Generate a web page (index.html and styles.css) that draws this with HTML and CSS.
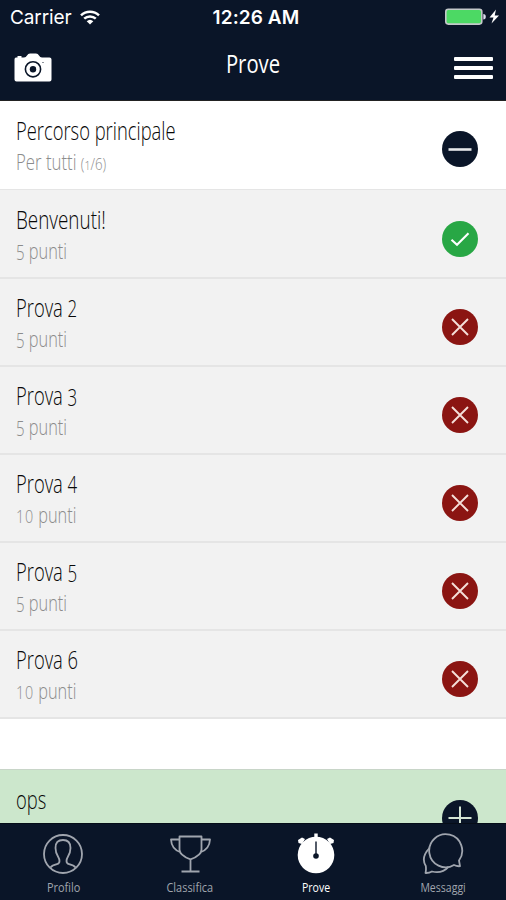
FILE: index.html
```html
<!DOCTYPE html>
<html lang="it">
<head>
<meta charset="utf-8">
<title>Prove</title>
<link rel="stylesheet" href="styles.css">
</head>
<body>
<svg class="defs" width="0" height="0">
  <symbol id="check" viewBox="0 0 36 36"><circle cx="18" cy="18" r="18" fill="#28a745"/><path d="M9.500 18.700l5.500 5L26.500 12.200" fill="none" stroke="#fff" stroke-width="2.100"/></symbol>
  <symbol id="cross" viewBox="0 0 36 36"><circle cx="18" cy="18" r="18" fill="#8b1512"/><path d="M10 10l16 16M26 10L10 26" fill="none" stroke="#f5dfda" stroke-width="1.9"/></symbol>
  <symbol id="minus" viewBox="0 0 36 36"><circle cx="18" cy="18" r="18" fill="#0a1528"/><path d="M6.500 18.500h23" stroke="#e6e8ea" stroke-width="2.600"/></symbol>
  <symbol id="plus" viewBox="0 0 36 36"><circle cx="18" cy="18" r="18" fill="#0a1528"/><path d="M6.500 18h23M18 6.500v23" stroke="#d5e5d5" stroke-width="2"/></symbol>
</svg>
<div class="app">
  <header class="header">
    <div class="status">
      <div class="carrier"><span>Carrier</span>
        <svg width="20" height="15" viewBox="0 0 20 15" fill="none" stroke="#fff" stroke-width="2.5"><path d="M1 5.300a13 13 0 0 1 18 0M4.200 8.700a8.400 8.400 0 0 1 11.600 0"/><path d="M10 14.500L6.700 11.200a4.800 4.800 0 0 1 6.600 0z" fill="#fff" stroke="none"/></svg>
      </div>
      <span class="time">12:26 AM</span>
      <svg class="battery" width="54" height="18" viewBox="0 0 54 18"><rect x=".8" y="1.300" width="36" height="14.800" rx="2.500" fill="#4cd964" stroke="#c3c8c9" stroke-width="1.600"/><path d="M38.300 6q2.500 0 2.500 2.700t-2.500 2.700z" fill="#dde"/><path d="M51 1.500L44.500 9.500h4L46.500 15.500 54 7.500h-4.300z" fill="#fff"/></svg>
    </div>
    <div class="navbar">
      <svg class="camera" width="38" height="29" viewBox="0 0 38 29"><path d="M2 4.500h1.500V3h4v1.500h2.500q2 0 3-2T16 .5h6q2 0 3 2t3 2h7.500q2 0 2 2v20q0 2-2 2h-33q-2 0-2-2v-20q0-2 1.500-2z" fill="#fff"/><circle cx="19" cy="16.300" r="7.600" fill="none" stroke="#0a1528" stroke-width="1.600"/><circle cx="19" cy="16.300" r="3.200" fill="#0a1528"/><circle cx="29" cy="9.500" r=".6" fill="#0a1528"/></svg>
      <h1 class="heading">Prove</h1>
      <div class="burger"><i></i><i></i><i></i></div>
    </div>
  </header>
  <main class="list">
    <section class="row main-row"><div><h2>Percorso principale</h2><p class="group">Per tutti <small>(<span class="one">1</span>/6)</small></p></div><svg class="badge"><use href="#minus"/></svg></section>
    <section class="row first"><div><h2 class="welcome">Benvenuti!</h2><p><span class="low">5</span> punti</p></div><svg class="badge"><use href="#check"/></svg></section>
    <section class="row"><div><h2>Prova <span class="mid">2</span></h2><p><span class="low">5</span> punti</p></div><svg class="badge"><use href="#cross"/></svg></section>
    <section class="row"><div><h2>Prova <span class="low">3</span></h2><p><span class="low">5</span> punti</p></div><svg class="badge"><use href="#cross"/></svg></section>
    <section class="row"><div><h2>Prova <span class="mid">4</span></h2><p><span class="ten">10</span> punti</p></div><svg class="badge"><use href="#cross"/></svg></section>
    <section class="row"><div><h2>Prova <span class="low">5</span></h2><p><span class="low">5</span> punti</p></div><svg class="badge"><use href="#cross"/></svg></section>
    <section class="row"><div><h2>Prova 6</h2><p><span class="ten">10</span> punti</p></div><svg class="badge"><use href="#cross"/></svg></section>
    <section class="row next"><div><h2>ops</h2></div><svg class="badge"><use href="#plus"/></svg></section>
  </main>
  <nav class="tabs">
    <a class="tab"><svg viewBox="0 0 42 42"><circle cx="21" cy="21" r="19"/><path d="M8.500 34.500q1.500-2 6.500-3.300 2.500-.7 2.500-3.200 0-2-1.500-4.500-2.500-4-2.500-8.500 0-8 7.500-8t7.500 8q0 4.500-2.500 8.500-1.500 2.500-1.500 4.500 0 2.500 2.500 3.200 5 1.300 6.500 3.300"/></svg><span class="profilo">Profilo</span></a>
    <a class="tab"><svg viewBox="0 0 42 42"><path d="M10.500 3.500h22v13q0 6-11 9.800-11-3.800-11-9.800zM10.500 6.500H2q.5 10 10 13M32.500 6.500H41q-.5 10-10 13M21.500 26.300V38M12.500 38.500h18"/></svg><span class="classifica">Classifica</span></a>
    <a class="tab active"><svg viewBox="0 0 42 42"><circle cx="21" cy="22" r="18.300"/><path d="M19.300 5V.5h3.400V5zM3.500 10l-.5-3 4-2.500L10 6l-3 5zM38.500 10l.5-3-4-2.500L32 6l3 5z"/><path class="needle" d="M21 8.500v14"/><circle class="hub" cx="21" cy="23" r="2.800"/></svg><span>Prove</span></a>
    <a class="tab"><svg viewBox="0 0 42 42"><path d="M37 27.500l1 5.700q-3 .3-6-1.200a16.500 16.500 0 1 1 5-4.500z"/><path d="M7.500 15q-9 9.500-3.700 18 .5 4-.3 7 3.500.2 6.500-1.500 10 2.500 16.500-4.700"/></svg><span>Messaggi</span></a>
  </nav>
</div>
</body>
</html>
```

FILE: styles.css
```css
* { box-sizing: border-box; }
body { margin: 0; background: #fff; font-family: "Open Sans", sans-serif; }
.defs { position: absolute; }
.app { width: 506px; height: 900px; display: flex; flex-direction: column; overflow: hidden; }
.header { height: 101px; flex: none; background: #0a1528; color: #fff; border-bottom: 1px solid #222; }
.status { height: 34px; display: grid; grid-template-columns: 1fr auto 1fr; align-items: center; padding: 0 7px 0 10px; font-family: Inter, sans-serif; font-size: 19px; }
.carrier { display: flex; align-items: center; gap: 8px; letter-spacing: -.1px; }
.time { font-weight: 600; letter-spacing: .1px; margin-left: 3px; }
.battery { justify-self: end; }
.navbar { height: 66px; display: grid; grid-template-columns: 1fr auto 1fr; align-items: center; padding: 0 13px 0 14px; }
.camera { margin-top: 1px; }
.heading { margin: -9px 0 0; font-size: 26px; line-height: 36px; font-weight: 500; width: 54px; display: flex; justify-content: center; transform: translateX(-1px) scaleX(.78); }
.burger { justify-self: end; display: grid; gap: 5px; margin-top: 2px; }
.burger i { width: 39px; height: 4px; border-radius: 1px; background: #fff; }
.list { flex: 1; min-height: 0; overflow: hidden; }
.row { height: 88px; display: flex; justify-content: space-between; align-items: flex-start; padding: 10px 28px 0 16px; background: #f2f2f2; border-bottom: 2px solid #e5e5e5; }
.main-row { height: 89px; padding-top: 11px; background: #fff; border-bottom-width: 1px; }
h2, p { margin: 0; white-space: nowrap; transform-origin: left center; }
h2 { width: 280px; font-size: 25.5px; font-weight: 300; line-height: 36px; color: #080808; transform: scaleX(.72); }
.welcome { transform: scaleX(.74); }
p { width: 200px; font-size: 21.5px; font-weight: 300; line-height: 28px; color: #8c8c8c; transform: scaleX(.76); }
.group { transform: scaleX(.78); }
small { font-size: 17px; }
.one { font-size: .8em; }
.mid, .low { font-size: .92em; line-height: 1; }
.low { position: relative; top: 1px; }
.ten { font-size: .88em; line-height: 1; letter-spacing: 1px; }
.badge { width: 36px; height: 36px; margin-top: 20px; flex: none; }
.main-row .badge { margin-top: 19px; }
.first { height: 89px; padding-top: 11px; }
.next { margin-top: 50px; padding-top: 11px; background: #cce7cc; border-top: 1px solid #c8d5c8; }
.next .badge { margin-top: 19px; }
.tabs { height: 77px; flex: none; display: grid; grid-template-columns: repeat(4, 1fr); background: #0a1528; border-top: 1px solid #060d18; }
.tab { display: flex; flex-direction: column; align-items: center; padding-top: 9px; color: #a0a5ae; font-size: 13.5px; line-height: 20px; }
.tab svg { width: 42px; height: 42px; fill: none; stroke: #a0a5ae; stroke-width: 1.8; stroke-linejoin: round; }
.tab span { margin-top: 2px; transform: scaleX(.78); }
.tab .profilo, .tab .classifica { transform: scaleX(.81); }
.tab.active { color: #fff; }
.active svg { fill: #fff; stroke: none; }
.active .needle { stroke: #0a1528; stroke-width: 1.4; }
.active .hub { fill: #0a1528; }
```
